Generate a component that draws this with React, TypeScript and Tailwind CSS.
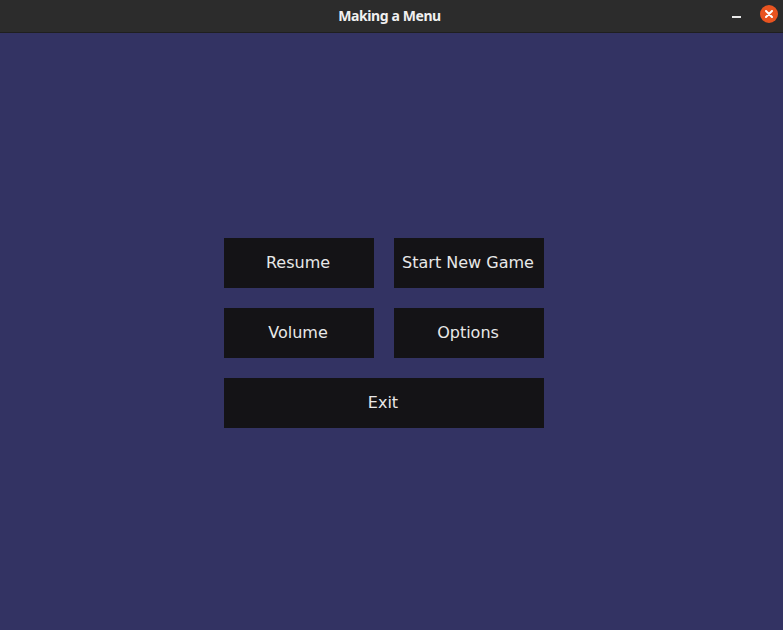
import React from "react";

function Btn({ label, wide }: { label: string; wide?: boolean }) {
  return (
    <div
      className={`flex items-center justify-center h-[50px] pr-[2px] bg-[#141316] text-[#e8e8e8] text-[16px] ${wide ? "w-[320px]" : "w-[150px]"}`}
      style={{ fontFamily: '"DejaVu Sans", sans-serif' }}
    >
      {label}
    </div>
  );
}

export default function App() {
  return (
    <div className="w-[783px] h-[630px] flex flex-col bg-[#333363] overflow-hidden">
      <div className="relative h-[33px] shrink-0 bg-[#2c2c2c] border-b border-[#1f1f1f] flex items-center justify-center">
        <span
          className="text-[14px] font-bold text-[#f0f0f0] tracking-[-0.4px] -mt-[2px] -ml-[4px]"
          style={{ fontFamily: '"Noto Sans", sans-serif' }}
        >
          Making a Menu
        </span>
        <div className="absolute right-[5px] top-[5px] flex items-center gap-[19px]">
          <div className="w-[9px] h-[2px] bg-[#e8e8e8] mt-[6px]" />
          <div className="w-[18px] h-[18px] rounded-full bg-[#e95420] flex items-center justify-center">
            <svg width="8" height="8" viewBox="0 0 8 8">
              <path d="M1 1 L7 7 M7 1 L1 7" stroke="#ffffff" strokeWidth="2" strokeLinecap="round" />
            </svg>
          </div>
        </div>
      </div>
      <div className="flex-1 flex flex-col">
        <div className="pt-[205px] pl-[224px] flex flex-col gap-[20px]">
          <div className="flex gap-[20px]">
            <Btn label="Resume" />
            <Btn label="Start New Game" />
          </div>
          <div className="flex gap-[20px]">
            <Btn label="Volume" />
            <Btn label="Options" />
          </div>
          <Btn label="Exit" wide />
        </div>
      </div>
    </div>
  );
}
